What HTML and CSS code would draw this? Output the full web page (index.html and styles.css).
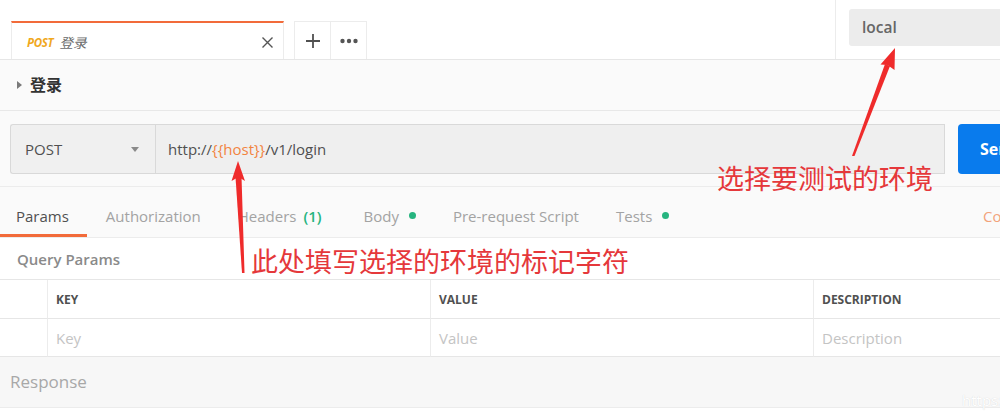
FILE: index.html
```html
<!DOCTYPE html>
<html lang="zh-CN">
<head>
<meta charset="utf-8">
<title>Postman</title>
<link rel="stylesheet" href="styles.css">
</head>
<body>
<div class="app">
  <header class="topbar">
    <div class="tabs-area">
      <div class="req-tab">
        <span class="req-method">POST</span>
        <span class="req-title">登录</span>
        <span class="req-close">
          <svg width="13" height="13" viewBox="0 0 13 13"><path d="M1.5 1.5 L11.5 11.5 M11.5 1.5 L1.5 11.5" stroke="#555" stroke-width="1.4" fill="none"/></svg>
        </span>
      </div>
      <div class="tab-btn">
        <svg width="16" height="16" viewBox="0 0 16 16"><path d="M8 1 V15 M1 8 H15" stroke="#505050" stroke-width="1.8" fill="none"/></svg>
      </div>
      <div class="tab-btn">
        <svg width="18" height="6" viewBox="0 0 18 6"><circle cx="2.5" cy="3" r="2.2" fill="#555"/><circle cx="9" cy="3" r="2.2" fill="#555"/><circle cx="15.5" cy="3" r="2.2" fill="#555"/></svg>
      </div>
    </div>
    <div class="env-area">
      <div class="env-select">local</div>
    </div>
  </header>

  <div class="name-row">
    <span class="caret-right"></span>
    <span class="name">登录</span>
  </div>

  <div class="url-section">
    <div class="method">
      <span>POST</span>
      <span class="caret-down"></span>
    </div>
    <div class="url-input">http://<span class="var">{{host}}</span>/v1/login</div>
    <div class="send">Send</div>
  </div>

  <nav class="req-tabs">
    <div class="rtab active">Params</div>
    <div class="rtab">Authorization</div>
    <div class="rtab headers">Headers <span class="count">(1)</span></div>
    <div class="rtab">Body <span class="dot"></span></div>
    <div class="rtab">Pre-request Script</div>
    <div class="rtab">Tests <span class="dot"></span></div>
    <div class="rtab-right">Cookies</div>
  </nav>

  <section class="query">
    <div class="query-title">Query Params</div>
    <div class="qtable">
      <div class="cell head first"></div>
      <div class="cell head">KEY</div>
      <div class="cell head">VALUE</div>
      <div class="cell head last">DESCRIPTION</div>
      <div class="cell first"></div>
      <div class="cell ph">Key</div>
      <div class="cell ph">Value</div>
      <div class="cell ph last">Description</div>
    </div>
  </section>

  <div class="response">Response</div>

  <svg class="arrows" width="1000" height="418" viewBox="0 0 1000 418">
    <polygon points="242,273 244.5,273 241.5,177 235.5,177" fill="#ef2b2b"/>
    <polygon points="238,161 231.5,181 238.5,177 245,181" fill="#ef2b2b"/>
    <polygon points="852,156 854.5,156 890,66 885,64" fill="#ef2b2b"/>
    <polygon points="895,48 880.5,64.5 887.5,65 894.5,70" fill="#ef2b2b"/>
  </svg>
  <div class="note note-env">选择要测试的环境</div>
  <div class="note note-host">此处填写选择的环境的标记字符</div>
  <div class="watermark">https://</div>
</div>
</body>
</html>
```

FILE: styles.css
```css
* { box-sizing: border-box; }
html, body { margin: 0; padding: 0; }
body {
  width: 1000px;
  height: 418px;
  overflow: hidden;
  background: #ffffff;
  font-family: "Open Sans", "Noto Sans CJK SC", sans-serif;
  color: #505050;
}
.app {
  position: relative;
  width: 1000px;
  height: 418px;
  overflow: hidden;
}

/* top bar */
.topbar {
  display: flex;
  height: 60px;
  background: #ffffff;
  border-bottom: 1px solid #e6e6e6;
  overflow: hidden;
}
.tabs-area {
  flex: 1;
  display: flex;
  align-items: flex-end;
  padding-left: 11px;
}
.req-tab {
  width: 273px;
  height: 38px;
  border-top: 2px solid #f26b3a;
  border-left: 1px solid #ececec;
  border-right: 1px solid #ececec;
  background: #fff;
  display: flex;
  align-items: center;
  padding: 2px 6px 0 15px;
}
.req-method {
  font-size: 11.5px;
  font-weight: 700;
  font-style: italic;
  color: #f0a81d;
  letter-spacing: -0.3px;
}
.req-title {
  margin-left: 6px;
  font-size: 13.5px;
  font-style: italic;
  color: #6a6a6a;
}
.req-close {
  margin-left: auto;
  width: 20px;
  display: flex;
  justify-content: center;
}
.tab-btn {
  width: 37px;
  height: 38px;
  border: 1px solid #ececec;
  border-bottom: none;
  display: flex;
  align-items: center;
  justify-content: center;
  margin-left: -1px;
}
.req-tab + .tab-btn { margin-left: 10px; }
.env-area {
  flex: 0 0 165px;
  min-width: 0;
  overflow: hidden;
  border-left: 1px solid #ececec;
  padding: 9px 0 0 13px;
}
.env-select {
  width: 200px;
  height: 37px;
  background: #ececec;
  border-radius: 3px;
  font-size: 15.5px;
  font-weight: 600;
  color: #666;
  padding-left: 13px;
  line-height: 37px;
}

/* request name */
.name-row {
  height: 51px;
  background: #fafafa;
  border-bottom: 1px solid #e8e8e8;
  display: flex;
  align-items: center;
  padding: 0 0 3px 17px;
}
.caret-right {
  width: 0; height: 0;
  border-top: 4px solid transparent;
  border-bottom: 4px solid transparent;
  border-left: 5px solid #7a7a7a;
  margin-top: 2px;
}
.name {
  margin-left: 8px;
  font-size: 16px;
  font-weight: 700;
  color: #333;
}

/* url row */
.url-section {
  display: flex;
  background: #fafafa;
  padding: 13px 0 12px 10px;
  border-bottom: 1px solid #ececec;
}
.method {
  flex: 0 0 145px;
  height: 50px;
  background: #f0f0f0;
  border: 1px solid #d9d9d9;
  border-right: none;
  border-radius: 3px 0 0 3px;
  display: flex;
  align-items: center;
  padding: 0 16px 0 14px;
  font-size: 15px;
  color: #505050;
}
.caret-down {
  margin-left: auto;
  width: 0; height: 0;
  border-left: 4.5px solid transparent;
  border-right: 4.5px solid transparent;
  border-top: 5px solid #8a8a8a;
}
.url-input {
  flex: 0 0 790px;
  height: 50px;
  background: #efefef;
  border: 1px solid #d9d9d9;
  display: flex;
  align-items: center;
  padding-left: 12px;
  font-size: 15px;
  color: #505050;
}
.var { color: #f2843f; }
.send {
  flex: 0 0 100px;
  margin-left: 13px;
  height: 50px;
  background: #097bed;
  border-radius: 4px;
  color: #fff;
  font-size: 16px;
  font-weight: 700;
  display: flex;
  align-items: center;
  padding-left: 22px;
}

/* request tabs */
.req-tabs {
  display: flex;
  height: 51px;
  background: #fafafa;
  border-bottom: 1px solid #ececec;
}
.rtab {
  display: flex;
  align-items: center;
  padding: 10px 18px 0 19px;
  font-size: 15px;
  color: #a3a3a3;
  border-bottom: 3px solid transparent;
  white-space: nowrap;
}
.rtab.active {
  color: #505050;
  padding-left: 16px;
  border-bottom-color: #f26b3a;
}
.rtab.headers { padding-right: 23px; }
.count { color: #26b47f; font-weight: 600; margin-left: 7px; }
.dot {
  display: inline-block;
  width: 7px; height: 7px;
  border-radius: 50%;
  background: #26b47f;
  margin-left: 10px;
}
.rtab-right {
  margin-left: auto;
  flex: 0 0 17px;
  overflow: hidden;
  display: flex;
  align-items: center;
  padding-top: 7px;
  font-size: 15px;
  color: #f2a37a;
  white-space: nowrap;
}

/* query params */
.query { background: #fff; }
.query-title {
  height: 41px;
  display: flex;
  align-items: center;
  padding-left: 17px;
  font-size: 15px;
  font-weight: 600;
  color: #8a8a8a;
}
.qtable {
  display: grid;
  grid-template-columns: 48px 383px 383px 1fr;
  border-top: 1px solid #e6e6e6;
}
.cell {
  height: 38px;
  border-right: 1px solid #ececec;
  border-bottom: 1px solid #e6e6e6;
  display: flex;
  align-items: center;
  padding-left: 8px;
}
.cell.last { border-right: none; }
.cell.head {
  height: 39px;
  font-size: 12px;
  font-weight: 700;
  color: #505050;
}
.cell.ph {
  font-size: 15px;
  color: #c4c4c4;
}

/* response */
.response {
  height: 51px;
  background: #f7f7f7;
  border-bottom: 1px solid #ececec;
  display: flex;
  align-items: center;
  padding: 0 0 1px 10px;
  font-size: 17px;
  color: #a8a8a8;
}

/* overlays */
.arrows {
  position: absolute;
  left: 0; top: 0;
  pointer-events: none;
}
.note {
  position: absolute;
  font-family: "Noto Sans CJK SC", sans-serif;
  font-size: 27px;
  line-height: 1;
  color: #e5383b;
  white-space: nowrap;
}
.note-env { left: 717px; top: 164px; }
.note-host { left: 251px; top: 247px; }
.watermark {
  position: absolute;
  left: 962px;
  top: 390px;
  font-size: 15px;
  color: #ffffff;
  text-shadow: 0 0 1px #d0d0d0;
}
```
